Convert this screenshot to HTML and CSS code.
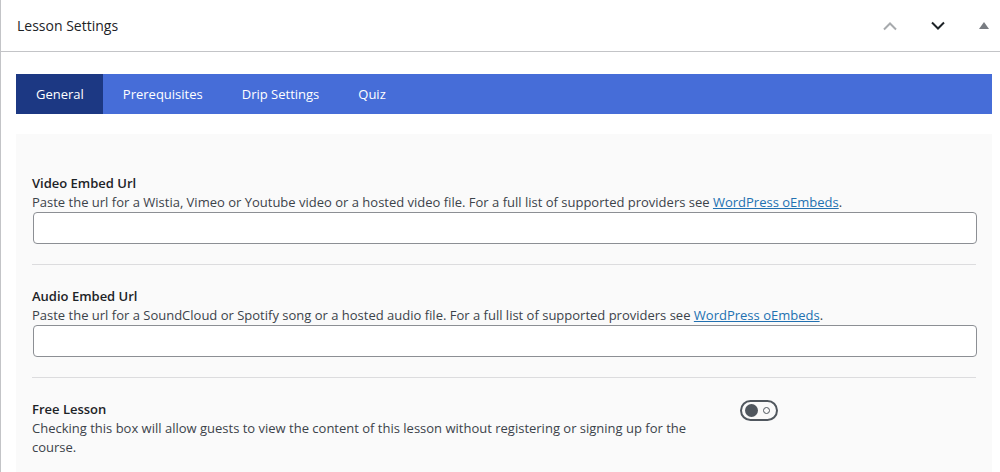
FILE: index.html
```html
<!DOCTYPE html>
<html lang="en">
<head>
    <meta charset="UTF-8">
    <meta name="viewport" content="width=device-width, initial-scale=1.0">
    <title>Lesson Settings</title>
    <link rel="stylesheet" href="styles.css">
</head>
<body>

<div class="postbox">
    <div class="postbox-header">
        <h2 class="hndle">Lesson Settings</h2>
        <div class="handle-actions">
            <button class="handle-btn up" aria-label="Move up">
                <svg width="16" height="10" viewBox="0 0 16 10"><path d="M2 8.5 L8 2.5 L14 8.5" fill="none" stroke="currentColor" stroke-width="2"/></svg>
            </button>
            <button class="handle-btn down" aria-label="Move down">
                <svg width="16" height="10" viewBox="0 0 16 10"><path d="M2 1.5 L8 7.5 L14 1.5" fill="none" stroke="currentColor" stroke-width="2"/></svg>
            </button>
            <button class="handle-btn toggle" aria-label="Toggle panel">
                <svg width="10" height="7" viewBox="0 0 10 7"><path d="M0 7 L5 0 L10 7 Z" fill="currentColor"/></svg>
            </button>
        </div>
    </div>

    <div class="inside">
        <ul class="tabs">
            <li class="tab active">General</li>
            <li class="tab">Prerequisites</li>
            <li class="tab">Drip Settings</li>
            <li class="tab">Quiz</li>
        </ul>

        <div class="tab-panel">
            <div class="field">
                <label class="field-label" for="video-url">Video Embed Url</label>
                <p class="field-desc">Paste the url for a Wistia, Vimeo or Youtube video or a hosted video file. For a full list of supported providers see <a href="#">WordPress oEmbeds</a>.</p>
                <input type="text" id="video-url" class="field-input">
            </div>

            <div class="field">
                <label class="field-label" for="audio-url">Audio Embed Url</label>
                <p class="field-desc">Paste the url for a SoundCloud or Spotify song or a hosted audio file. For a full list of supported providers see <a href="#">WordPress oEmbeds</a>.</p>
                <input type="text" id="audio-url" class="field-input">
            </div>

            <div class="field field-row">
                <div>
                    <div class="field-label">Free Lesson</div>
                    <p class="field-desc">Checking this box will allow guests to view the content of this lesson without registering or signing up for the course.</p>
                </div>
                <div>
                    <span class="switch"><span class="knob"></span><span class="off-dot"></span></span>
                </div>
            </div>
        </div>
    </div>
</div>

</body>
</html>
```

FILE: styles.css
```css
body {
    margin: 0;
    background: #fff;
    font-family: 'Open Sans', 'Noto Sans', sans-serif;
    font-size: 13px;
    color: #3c434a;
}
.postbox {
    border-left: 1px solid #c3c4c7;
    min-height: 472px;
}
.postbox-header {
    height: 51px;
    display: flex;
    align-items: center;
    justify-content: space-between;
    padding-left: 16px;
    border-bottom: 1px solid #c3c4c7;
}
.hndle {
    margin: 0;
    font-size: 14px;
    font-weight: 400;
    color: #1d2327;
}
.handle-actions {
    display: flex;
    gap: 12px;
}
.handle-btn {
    width: 36px;
    height: 36px;
    padding: 0;
    border: none;
    background: none;
    display: flex;
    align-items: center;
    justify-content: center;
}
.handle-btn.up {
    color: #a7aaad;
}
.handle-btn.down {
    color: #1d2327;
}
.handle-btn.toggle {
    width: 32px;
    color: #787c82;
}
.inside {
    padding: 22px 8px 0 15px;
}
.tabs {
    display: flex;
    margin: 0;
    padding: 0;
    list-style: none;
    height: 40px;
    background: #466dd8;
}
.tab {
    padding: 0 19px 0 20px;
    line-height: 40px;
    font-size: 13px;
    color: #fff;
}
.tab.active {
    background: #1c3883;
}
.tab-panel {
    margin-top: 20px;
    padding: 18px 16px 0 16px;
    background: #fafafa;
    min-height: 320px;
}
.field {
    padding: 22px 0 20px;
    border-bottom: 1px solid #dcdcde;
}
.field:last-child {
    border-bottom: none;
}
.field-label {
    display: block;
    font-weight: 600;
    line-height: 19px;
    color: #1d2327;
}
.field-desc {
    margin: 0;
    line-height: 19px;
}
.field-desc a {
    color: #2271b1;
}
.field-input {
    display: block;
    box-sizing: border-box;
    width: 100%;
    height: 32px;
    margin-left: 1px;
    border: 1px solid #8c8f94;
    border-radius: 4px;
    background: #fff;
}
.field-row {
    display: grid;
    grid-template-columns: 3fr 1fr;
}
.field-row .field-desc {
    padding-right: 40px;
}
.switch {
    display: flex;
    align-items: center;
    justify-content: space-between;
    box-sizing: border-box;
    width: 38px;
    height: 21px;
    padding: 0 6px 0 3px;
    border: 2px solid #50575e;
    border-radius: 11px;
}
.knob {
    width: 13px;
    height: 13px;
    border-radius: 50%;
    background: #50575e;
}
.off-dot {
    box-sizing: border-box;
    width: 7px;
    height: 7px;
    border: 1px solid #50575e;
    border-radius: 50%;
}
```
